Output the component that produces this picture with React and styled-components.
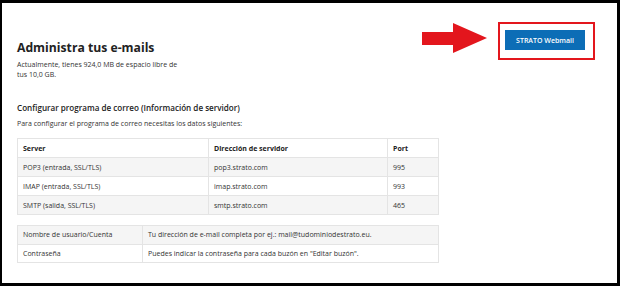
import React from 'react'
import styled, { createGlobalStyle } from 'styled-components'

const GlobalStyle = createGlobalStyle`
  html, body {
    margin: 0;
    padding: 0;
    background: #000;
  }
  body {
    font-family: 'Open Sans', 'DejaVu Sans', sans-serif;
    color: #333;
  }
`

const Frame = styled.div`
  width: 620px;
  height: 286px;
  box-sizing: border-box;
  border-style: solid;
  border-color: #000;
  border-width: 3px 3px 3px 2px;
  background: #fff;
  padding: 19px 22px 0 15px;
  overflow: hidden;
`

const Header = styled.div`
  display: flex;
  justify-content: space-between;
  align-items: flex-start;
`

const Intro = styled.div`
  display: flex;
  flex-direction: column;
`

const Title = styled.h1`
  margin: 17px 0 0;
  font-size: 12.2px;
  line-height: 18px;
  font-weight: 700;
  color: #222;
`

const Text = styled.p`
  margin: ${p => p.$top || 0}px 0 0;
  font-size: 7px;
  line-height: 10px;
  color: #333;
  max-width: ${p => (p.$narrow ? '165px' : 'none')};
`

const Callout = styled.div`
  display: flex;
  align-items: center;
  gap: 11px;
`

const Arrow = styled.svg`
  display: block;
  margin-bottom: 6px;
`

const Highlight = styled.div`
  border: 2px solid #e3161d;
  padding: 6px 8px 8px 5px;
`

const WebmailButton = styled.button`
  display: flex;
  align-items: center;
  justify-content: center;
  width: 80px;
  height: 20px;
  border: 0;
  padding: 0;
  background: #0c6db6;
  color: #fff;
  font-family: 'Open Sans', sans-serif;
  font-size: 7px;
  font-weight: 600;
`

const SubTitle = styled.h2`
  margin: 22px 0 0;
  font-size: 8.1px;
  line-height: 12px;
  font-weight: 600;
  color: #222;
`

const Table = styled.table`
  width: 421px;
  margin-top: ${p => p.$top}px;
  border-collapse: collapse;
  table-layout: fixed;
  font-size: 7px;
  color: #333;
`

const Col = styled.col`
  width: ${p => p.$w}px;
`

const Row = styled.tr`
  height: ${p => p.$h || 19}px;
  background: ${p => (p.$shaded ? '#f5f5f5' : '#fff')};
`

const Cell = styled.td`
  border: 1px solid #e4e4e4;
  padding: 0 5px;
  vertical-align: middle;
  white-space: nowrap;
  font-weight: ${p => (p.$head ? 700 : 400)};
  color: ${p => (p.$head ? '#222' : '#333')};
`

const servers = [
  ['POP3 (entrada, SSL/TLS)', 'pop3.strato.com', '995'],
  ['IMAP (entrada, SSL/TLS)', 'imap.strato.com', '993'],
  ['SMTP (salida, SSL/TLS)', 'smtp.strato.com', '465'],
]

const account = [
  ['Nombre de usuario/Cuenta', 'Tu dirección de e-mail completa por ej.: mail@tudominiodestrato.eu.'],
  ['Contraseña', 'Puedes indicar la contraseña para cada buzón en "Editar buzón".'],
]

const App = () => (
  <>
    <GlobalStyle />
    <Frame>
      <Header>
        <Intro>
          <Title>Administra tus e-mails</Title>
          <Text $top={3} $narrow>
            Actualmente, tienes 924,0 MB de espacio libre de tus 10,0 GB.
          </Text>
        </Intro>
        <Callout>
          <Arrow width="65" height="30" viewBox="0 0 65 30">
            <polygon points="0,9 31,9 31,0 65,15 31,30 31,22 0,22" fill="#e3161d" />
          </Arrow>
          <Highlight>
            <WebmailButton>STRATO Webmail</WebmailButton>
          </Highlight>
        </Callout>
      </Header>

      <SubTitle>Configurar programa de correo (Información de servidor)</SubTitle>
      <Text $top={5}>Para configurar el programa de correo necesitas los datos siguientes:</Text>

      <Table $top={9}>
        <colgroup>
          <Col $w={191} />
          <Col $w={179} />
          <Col $w={51} />
        </colgroup>
        <tbody>
          <Row>
            <Cell $head>Server</Cell>
            <Cell $head>Dirección de servidor</Cell>
            <Cell $head>Port</Cell>
          </Row>
          {servers.map(([name, host, port], i) => (
            <Row key={name} $shaded={i % 2 === 0}>
              <Cell>{name}</Cell>
              <Cell>{host}</Cell>
              <Cell>{port}</Cell>
            </Row>
          ))}
        </tbody>
      </Table>

      <Table $top={10}>
        <colgroup>
          <Col $w={125} />
          <Col $w={296} />
        </colgroup>
        <tbody>
          {account.map(([label, value], i) => (
            <Row key={label} $h={18.5} $shaded={i === 0}>
              <Cell>{label}</Cell>
              <Cell>{value}</Cell>
            </Row>
          ))}
        </tbody>
      </Table>
    </Frame>
  </>
)

export default App
